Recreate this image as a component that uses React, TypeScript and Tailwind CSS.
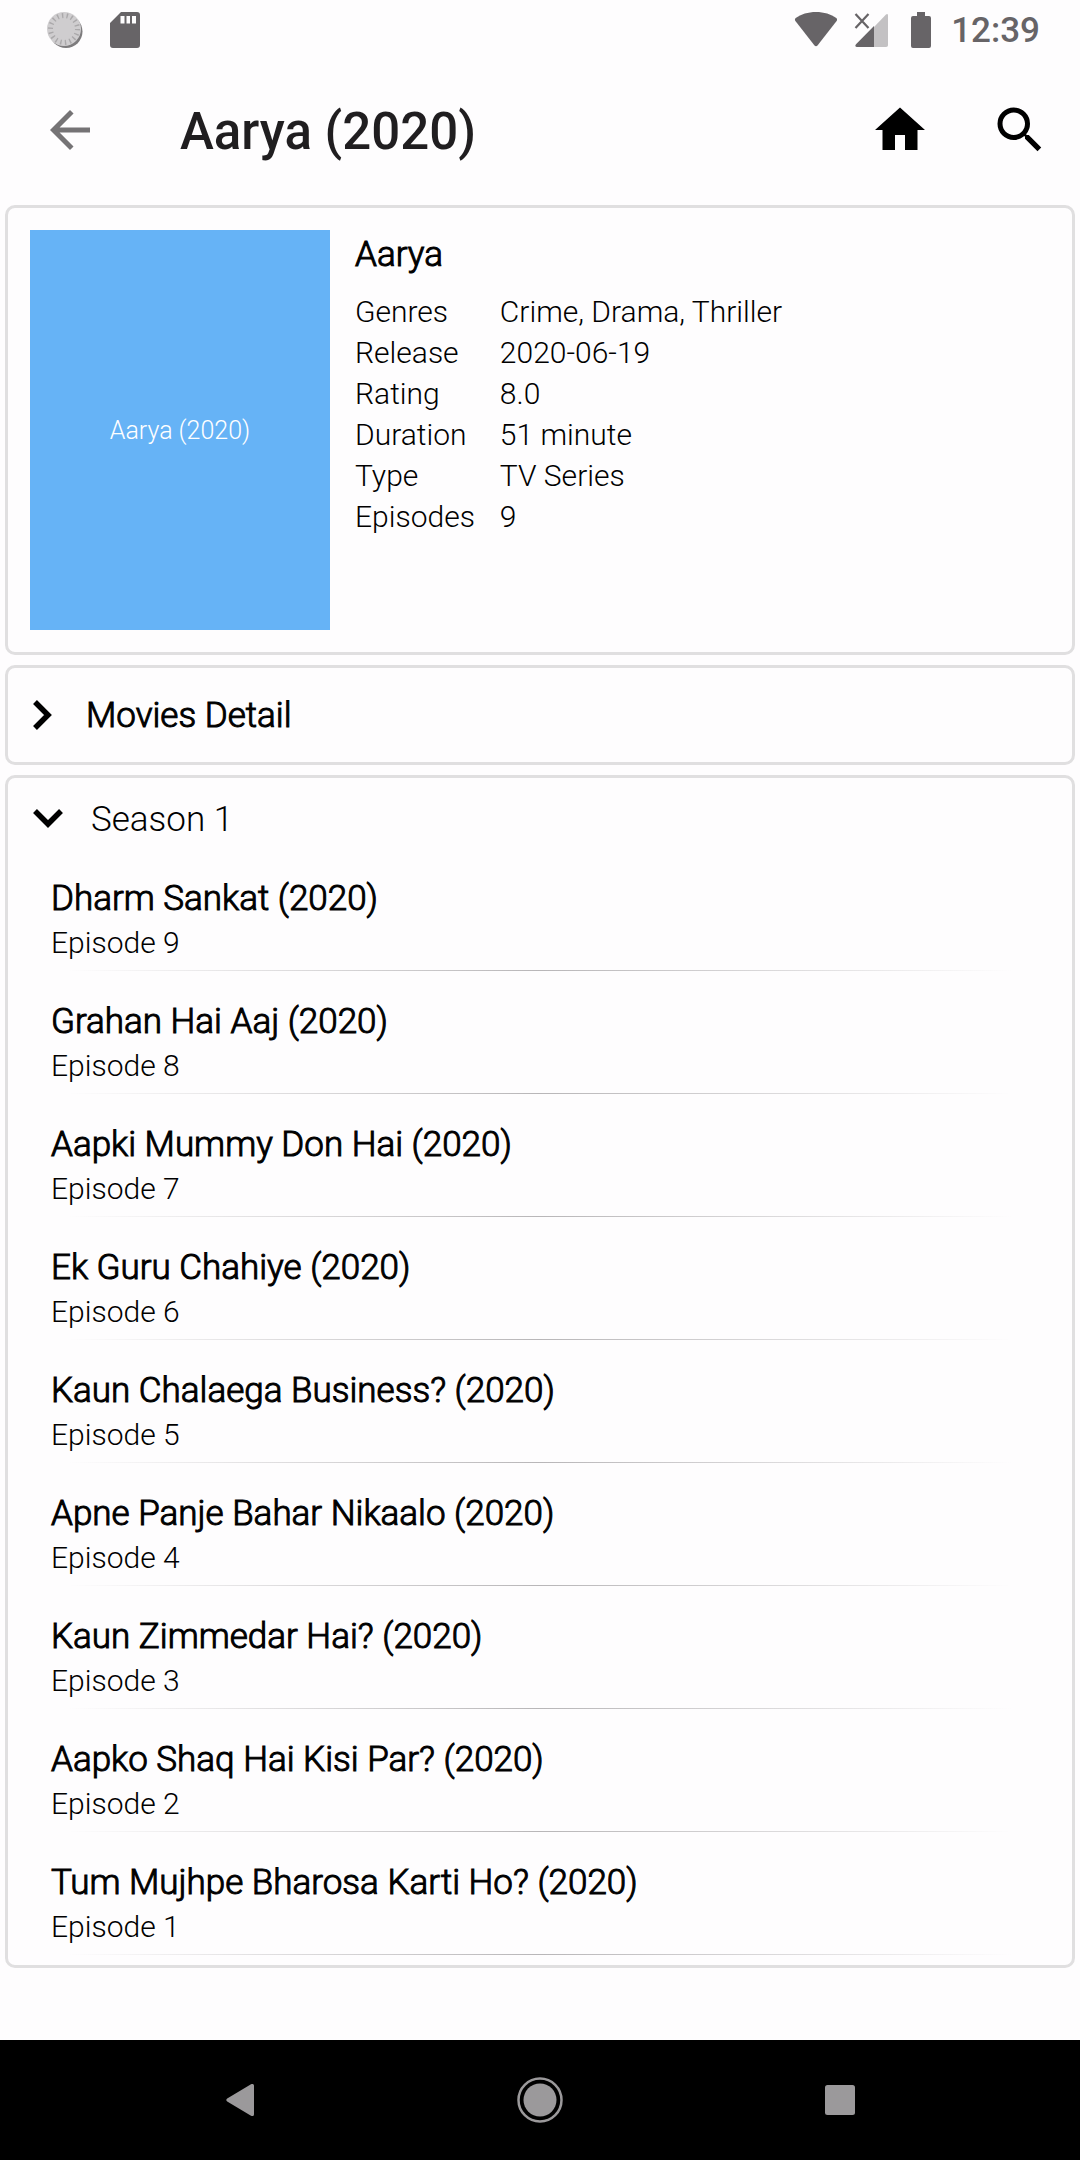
import { useState } from 'react'
import type { ReactNode } from 'react'
import { MdArrowBack, MdHome, MdSearch } from 'react-icons/md'

interface Episode {
  number: number
  title: string
}

const details = [
  { label: 'Genres', value: 'Crime, Drama, Thriller' },
  { label: 'Release', value: '2020-06-19' },
  { label: 'Rating', value: '8.0' },
  { label: 'Duration', value: '51 minute' },
  { label: 'Type', value: 'TV Series' },
  { label: 'Episodes', value: '9' },
]

const episodes: Episode[] = [
  { number: 9, title: 'Dharm Sankat (2020)' },
  { number: 8, title: 'Grahan Hai Aaj (2020)' },
  { number: 7, title: 'Aapki Mummy Don Hai (2020)' },
  { number: 6, title: 'Ek Guru Chahiye (2020)' },
  { number: 5, title: 'Kaun Chalaega Business? (2020)' },
  { number: 4, title: 'Apne Panje Bahar Nikaalo (2020)' },
  { number: 3, title: 'Kaun Zimmedar Hai? (2020)' },
  { number: 2, title: 'Aapko Shaq Hai Kisi Par? (2020)' },
  { number: 1, title: 'Tum Mujhpe Bharosa Karti Ho? (2020)' },
]

function StatusBar() {
  return (
    <div className="flex h-[60px] items-center justify-between pr-10 pl-[46px] text-[#676467]">
      <div className="flex items-center gap-[26px]">
        <svg width="38" height="38" viewBox="0 0 38 38" aria-hidden="true">
          <circle cx="20" cy="20.500" r="16.500" fill="#7d7b7d" />
          <circle cx="18" cy="18" r="17" fill="#cfcdcf" />
          <circle
            cx="18"
            cy="18"
            r="13.5"
            fill="none"
            stroke="#aaa8aa"
            strokeWidth="5"
            strokeDasharray="1.4 3.3"
          />
        </svg>
        <svg width="30" height="36" viewBox="0 0 30 36" fill="currentColor" aria-hidden="true">
          <path
            fillRule="evenodd"
            d="M11 0h16a3 3 0 0 1 3 3v30a3 3 0 0 1-3 3H3a3 3 0 0 1-3-3V11zM10.5 4v7.5h4V4zM16.5 4v7.5h3.5V4zM22 4v7.5h4V4z"
          />
        </svg>
      </div>
      <div className="flex items-center">
        <svg width="44" height="36" viewBox="0 0 44 36" fill="currentColor" aria-hidden="true">
          <path d="M22 0c8 0 15 2.300 20.300 6 1 .8 1 2 .3 3L23.500 33.500c-.8 1-2.200 1-3 0L1.400 9c-.7-1-.7-2.200.3-3C7 2.300 14 0 22 0z" />
        </svg>
        <svg className="ml-4" width="36" height="36" viewBox="0 0 36 36" aria-hidden="true">
          <path d="M20 15 32 2.500c1-1 2-.6 2 1V33c0 1-.6 2-2 2H20z" fill="#c3c1c3" />
          <path d="M20 14v21H3c-1.800 0-2.200-1.500-1-2.700z" fill="currentColor" />
          <path d="m1.500 2 13 14M14.500 2l-13 14" stroke="currentColor" strokeWidth="2.200" fill="none" />
        </svg>
        <svg className="ml-[21px]" width="20" height="36" viewBox="0 0 20 36" fill="currentColor" aria-hidden="true">
          <path d="M6 0h8v4h4a2 2 0 0 1 2 2v28a2 2 0 0 1-2 2H2a2 2 0 0 1-2-2V6a2 2 0 0 1 2-2h4z" />
        </svg>
        <span className="ml-5 pt-0.5 text-[35px] leading-[60px] font-medium">12:39</span>
      </div>
    </div>
  )
}

function Header() {
  return (
    <header className="flex h-[140px] items-center pr-[30px] pl-10">
      <button type="button" aria-label="Back" className="text-[#757375]">
        <MdArrowBack size={60} />
      </button>
      <h1 className="ml-20 flex-1 pt-1 text-[51px] leading-[60px] font-medium text-[#201e20]">
        Aarya (2020)
      </h1>
      <button type="button" aria-label="Home">
        <MdHome size={60} />
      </button>
      <button type="button" aria-label="Search" className="ml-[60px]">
        <MdSearch size={60} />
      </button>
    </header>
  )
}

function Card({ children }: { children: ReactNode }) {
  return <section className="rounded-[10px] border-3 border-[#e0dfe0]">{children}</section>
}

function Chevron({ open }: { open: boolean }) {
  return open ? (
    <svg width="30" height="30" viewBox="0 0 30 30" fill="none" aria-hidden="true">
      <path d="m2 7 13 13L28 7" stroke="currentColor" strokeWidth="5.500" />
    </svg>
  ) : (
    <svg width="30" height="30" viewBox="0 0 30 30" fill="none" aria-hidden="true">
      <path d="m3 2 13 13L3 28" stroke="currentColor" strokeWidth="5.500" />
    </svg>
  )
}

function EpisodeRow({ episode }: { episode: Episode }) {
  return (
    <li>
      <a href={`#episode-${episode.number}`} className="block px-[43px] pt-[27px] pb-[7px]">
        <span className="block text-[35px] leading-12 [-webkit-text-stroke:1px_black]">{episode.title}</span>
        <span className="block text-[30px] leading-10">Episode {episode.number}</span>
      </a>
      <div className="mx-[60px] h-px bg-linear-to-r from-transparent via-[#b8b6b8] to-transparent" />
    </li>
  )
}

function NavBar() {
  return (
    <nav className="grid h-[120px] grid-cols-3 place-items-center bg-black px-[90px] text-[#9b999b]">
      <button type="button" aria-label="Back">
        <svg width="28" height="34" viewBox="0 0 28 34" fill="currentColor">
          <path d="M25 1.300c1.500-.9 3-.3 3 1.500v28.400c0 1.800-1.500 2.400-3 1.500L1.200 18.500c-1.200-.8-1.200-2.200 0-3z" />
        </svg>
      </button>
      <button type="button" aria-label="Home">
        <svg width="46" height="46" viewBox="0 0 46 46">
          <circle cx="23" cy="23" r="21.500" fill="none" stroke="currentColor" strokeWidth="2.500" />
          <circle cx="23" cy="23" r="16.500" fill="currentColor" />
        </svg>
      </button>
      <button type="button" aria-label="Recent apps">
        <svg width="30" height="30" viewBox="0 0 30 30" fill="currentColor">
          <rect width="30" height="30" rx="2.500" />
        </svg>
      </button>
    </nav>
  )
}

export default function App() {
  const [showDetail, setShowDetail] = useState(false)
  const [showSeason, setShowSeason] = useState(true)

  return (
    <div className="flex min-h-screen flex-col bg-[#fefdfe] font-[Roboto,sans-serif] font-light text-black">
      <StatusBar />
      <Header />

      <main className="flex flex-1 flex-col gap-2.5 p-[5px]">
        <Card>
          <div className="flex gap-[25px] p-[22px]">
            <div className="flex h-[400px] w-[300px] shrink-0 items-center justify-center bg-[#66b3f6] pt-0.5 text-[25px] text-white">
              Aarya (2020)
            </div>
            <div className="pt-px">
              <h2 className="mb-3 text-[35px] leading-12 [-webkit-text-stroke:1px_black]">Aarya</h2>
              <dl className="grid grid-cols-[auto_1fr] gap-x-[25px] text-[30px] leading-[41px]">
                {details.map((item) => (
                  <div key={item.label} className="contents">
                    <dt>{item.label}</dt>
                    <dd>{item.value}</dd>
                  </div>
                ))}
              </dl>
            </div>
          </div>
        </Card>

        <Card>
          <button
            type="button"
            aria-expanded={showDetail}
            onClick={() => setShowDetail(!showDetail)}
            className="flex h-[94px] w-full items-center gap-6 pl-6 text-[35px] [-webkit-text-stroke:1px_black]"
          >
            <Chevron open={showDetail} />
            <span className="pt-0.5">Movies Detail</span>
          </button>
        </Card>

        <Card>
          <button
            type="button"
            aria-expanded={showSeason}
            onClick={() => setShowSeason(!showSeason)}
            className="flex h-[70px] w-full items-center gap-7 pt-3 pl-[25px] text-[35px]"
          >
            <Chevron open={showSeason} />
            <span className="pt-0.5">Season 1</span>
          </button>
          {showSeason && (
            <ul className="pb-2.5">
              {episodes.map((episode) => (
                <EpisodeRow key={episode.number} episode={episode} />
              ))}
            </ul>
          )}
        </Card>
      </main>

      <NavBar />
    </div>
  )
}
